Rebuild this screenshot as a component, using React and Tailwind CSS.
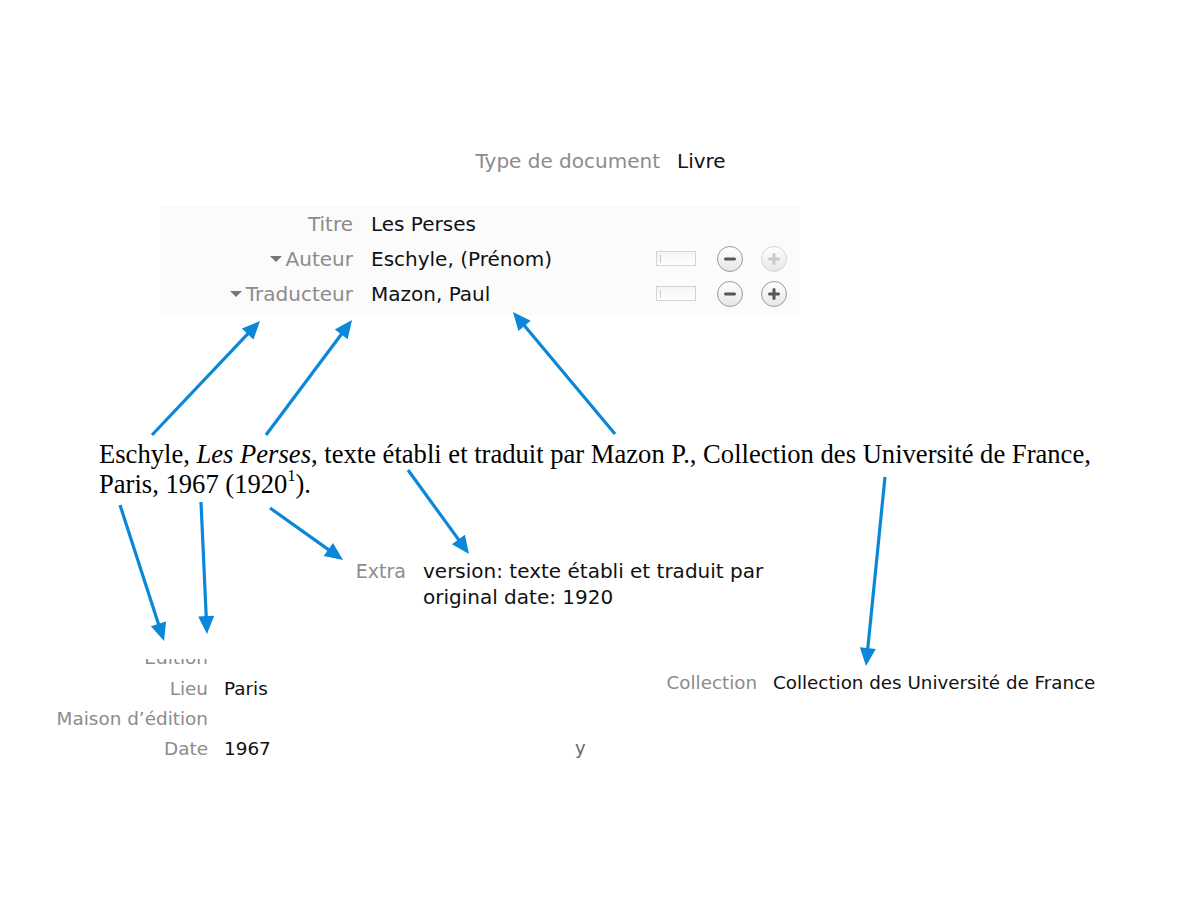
import React from "react";

const arrows = [
  [152, 435, 260, 321],
  [266, 435, 352, 320],
  [615, 434, 513, 312],
  [120, 505, 164, 641],
  [201, 502, 207, 634],
  [270, 508, 343, 560],
  [408, 470, 469, 554],
  [885, 477, 866, 666],
];

function Arrow({ a }) {
  const [x1, y1, x2, y2] = a;
  const dx = x2 - x1;
  const dy = y2 - y1;
  const len = Math.hypot(dx, dy);
  const ux = dx / len;
  const uy = dy / len;
  const L = 18;
  const W = 8;
  const bx = x2 - ux * L;
  const by = y2 - uy * L;
  const p = `${x2},${y2} ${bx + -uy * W},${by + ux * W} ${bx - -uy * W},${by - ux * W}`;
  return (
    <g>
      <line x1={x1} y1={y1} x2={x2 - ux * (L - 4)} y2={y2 - uy * (L - 4)} stroke="#0a87d9" strokeWidth="3.2" />
      <polygon points={p} fill="#0a87d9" />
    </g>
  );
}

const ui = { fontFamily: '"DejaVu Sans", "Liberation Sans", sans-serif' };

function Field() {
  return (
    <div className="w-[40px] h-[15px] border border-[#d4d4d4] bg-gradient-to-b from-[#f4f4f4] to-white flex items-center pl-[3px]">
      <div className="w-px h-[8px] bg-[#c8c8c8]" />
    </div>
  );
}

function RoundBtn({ kind, disabled }) {
  const c = disabled ? "#c9c9c9" : "#555";
  return (
    <div
      className={
        "w-[26px] h-[26px] rounded-full border flex items-center justify-center bg-gradient-to-b from-white to-[#e6e6e6] " +
        (disabled ? "border-[#d6d6d6]" : "border-[#9a9a9a]")
      }
    >
      <svg width="14" height="14" viewBox="0 0 14 14">
        <rect x="1" y="5.5" width="12" height="3" rx="1.5" fill={c} />
        {kind === "plus" && <rect x="5.5" y="1" width="3" height="12" rx="1.5" fill={c} />}
      </svg>
    </div>
  );
}

function Row({ label, value, tri, controls, plusDisabled }) {
  return (
    <div className="flex items-center h-[35px]">
      <div className="w-[193px] flex justify-end items-center text-[#8c8c8c]">
        {tri && (
          <svg width="12" height="8" viewBox="0 0 12 8" className="mr-[4px] mt-[1px]">
            <polygon points="0,1 12,1 6,7" fill="#777" />
          </svg>
        )}
        <span>{label}</span>
      </div>
      <div className="ml-[18px] w-[285px] text-[#111]">{value}</div>
      {controls && (
        <div className="flex items-center">
          <Field />
          <div className="ml-[21px]"><RoundBtn kind="minus" /></div>
          <div className="ml-[18px]"><RoundBtn kind="plus" disabled={plusDisabled} /></div>
        </div>
      )}
    </div>
  );
}

export default function App() {
  return (
    <div className="relative w-[1200px] h-[900px] bg-white overflow-hidden" style={ui}>
      {/* Type de document */}
      <div className="absolute left-[400px] top-[148px] flex items-center h-[26px] text-[20px]">
        <span className="w-[260px] text-right text-[#8c8c8c]">Type de document</span>
        <span className="ml-[17px] text-[#111]">Livre</span>
      </div>

      {/* Creators panel */}
      <div className="absolute left-[160px] top-[206px] w-[640px] h-[109px] bg-[#fbfbfb] text-[20px]">
        <Row label="Titre" value="Les Perses" />
        <Row label="Auteur" value="Eschyle, (Prénom)" tri controls plusDisabled />
        <Row label="Traducteur" value="Mazon, Paul" tri controls />
      </div>

      {/* Citation */}
      <div
        className="absolute left-[99px] top-[439px] w-[1060px] text-[26.6px] leading-[30px] text-black"
        style={{ fontFamily: '"Liberation Serif", "Times New Roman", serif' }}
      >
        <div>
          Eschyle, <i>Les Perses</i>, texte établi et traduit par Mazon P., Collection des Université de France,
        </div>
        <div>
          Paris, 1967 (1920<sup className="text-[16px] top-[-0.75em]">1</sup>).
        </div>
      </div>

      {/* Extra */}
      <div className="absolute left-[300px] top-[558px] flex text-[20px] leading-[26px]">
        <span className="w-[106px] text-right text-[#8c8c8c] text-[19px]">Extra</span>
        <div className="ml-[17px] text-[#111]">
          <div>version: texte établi et traduit par</div>
          <div>original date: 1920</div>
        </div>
      </div>

      {/* Bottom left fields */}
      <div className="absolute left-[0px] top-[659px] text-[18.4px]">
        <div className="h-[5px] overflow-hidden relative w-[208px]">
          <div className="absolute right-0 top-[-14px] leading-[26px] text-[#8c8c8c]">Édition</div>
        </div>
        <div className="mt-[10px] flex items-center h-[30px]">
          <span className="w-[208px] text-right text-[#8c8c8c]">Lieu</span>
          <span className="ml-[16px] text-[#111]">Paris</span>
        </div>
        <div className="flex items-center h-[30px]">
          <span className="w-[208px] text-right text-[#8c8c8c]">Maison d’édition</span>
        </div>
        <div className="flex items-center h-[30px]">
          <span className="w-[208px] text-right text-[#8c8c8c]">Date</span>
          <span className="ml-[16px] text-[#111]">1967</span>
        </div>
      </div>

      {/* Collection */}
      <div className="absolute left-[560px] top-[670px] flex items-center h-[26px] text-[18.3px]">
        <span className="w-[197px] text-right text-[#8c8c8c]">Collection</span>
        <span className="ml-[16px] text-[#111]">Collection des Université de France</span>
      </div>

      <div className="absolute left-[575px] top-[734px] h-[26px] flex items-center text-[18px] text-[#666]">y</div>

      {/* Arrows */}
      <svg className="absolute left-0 top-0 pointer-events-none" width="1200" height="900">
        {arrows.map((a, i) => (
          <Arrow key={i} a={a} />
        ))}
      </svg>
    </div>
  );
}
